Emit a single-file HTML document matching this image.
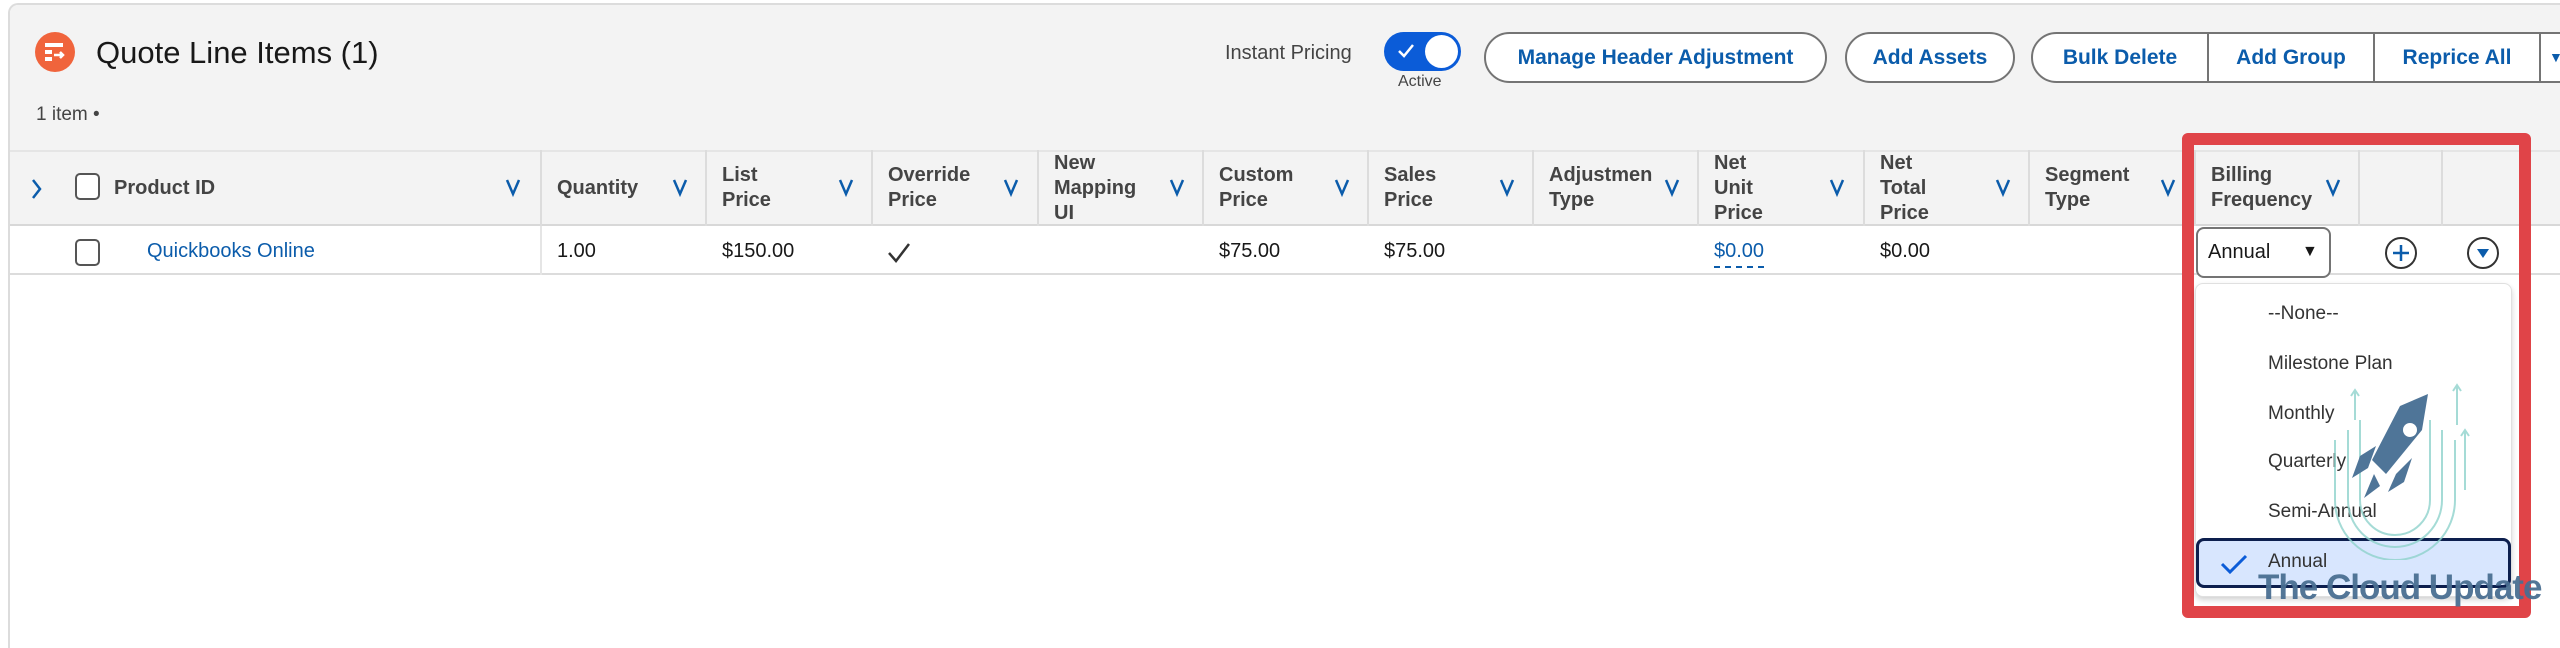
<!DOCTYPE html>
<html style="overflow:hidden;height:648px"><head><meta charset="utf-8"><style>
*{box-sizing:border-box;margin:0;padding:0}
body{width:2560px;height:648px;overflow:hidden;background:#fff;font-family:"Liberation Sans",sans-serif;position:relative;color:#181818}
.abs{position:absolute}
.card{left:8px;top:3px;width:2552px;height:645px;border:2px solid #dcdcdc;border-bottom:none;border-right:none;border-radius:10px 0 0 0;background:#fff}
.top{left:10px;top:5px;width:2550px;height:145px;background:#f3f3f3;border-radius:8px 0 0 0}
.btn{position:absolute;top:32px;height:51px;border:2px solid #747474;border-radius:26px;background:#fff;color:#0b5cab;font-size:21px;font-weight:bold;display:flex;align-items:center;justify-content:center}
.hdr{left:10px;top:150px;width:2550px;height:76px;background:#f3f3f3;border-top:2px solid #e5e5e5;border-bottom:2px solid #d8d8d8}
.col{position:absolute;top:150px;height:76px;border-left:2px solid #dcdcdc;font-size:20px;font-weight:bold;color:#444;line-height:25px;display:flex;align-items:center;padding-left:15px}
.cell{position:absolute;top:240px;font-size:20px;color:#181818}
.vl{position:absolute;top:226px;height:49px;width:2px;background:#e5e5e5}
.opt{position:absolute;left:2268px;font-size:19px;color:#333}
</style></head><body>
<div class="abs card"></div>
<div class="abs top"></div>
<svg class="abs" style="left:35px;top:32px" width="40" height="40" viewBox="0 0 40 40"><circle cx="20" cy="20" r="20" fill="#f0643c"/><rect x="10" y="11" width="18" height="4" fill="#fff"/><rect x="10" y="18" width="7" height="4" fill="#fff"/><rect x="10" y="25" width="7" height="4" fill="#fff"/><path d="M19 23h9m-3-3l3 3-3 3" stroke="#fff" stroke-width="2.5" fill="none"/></svg>
<div class="abs" style="left:96px;top:35px;font-size:31px;color:#181818">Quote Line Items (1)</div>
<div class="abs" style="left:36px;top:104px;font-size:19px;color:#444">1 item •</div>
<div class="abs" style="left:1225px;top:42px;font-size:20px;color:#444">Instant Pricing</div>
<div class="abs" style="left:1384px;top:32px;width:77px;height:39px;border-radius:20px;background:#0b5cd8"></div>
<div class="abs" style="left:1425px;top:35px;width:33px;height:33px;border-radius:50%;background:#fff"></div>
<svg class="abs" style="left:1397px;top:43px" width="18" height="16"><path d="M2 8l5 5 9-11" stroke="#fff" stroke-width="2.5" fill="none"/></svg>
<div class="abs" style="left:1398px;top:73px;font-size:16px;color:#444">Active</div>
<div class="btn" style="left:1484px;width:343px">Manage Header Adjustment</div>
<div class="btn" style="left:1845px;width:170px">Add Assets</div>
<div class="btn" style="left:2031px;width:600px;justify-content:flex-start;border-radius:26px 0 0 26px">
<span style="width:174px;text-align:center">Bulk Delete</span><span style="width:166px;text-align:center;border-left:2px solid #747474;line-height:47px">Add Group</span><span style="width:166px;text-align:center;border-left:2px solid #747474;line-height:47px">Reprice All</span><span style="width:30px;border-left:2px solid #747474;line-height:47px;padding-left:8px;font-size:14px">▼</span></div>
<div class="abs hdr"></div>
<svg class="abs" style="left:30px;top:178px" width="14" height="22"><path d="M3 2l7 9-7 9" stroke="#0b5cab" stroke-width="2.5" fill="none"/></svg>
<div class="abs" style="left:75px;top:173px;width:25px;height:27px;border:2px solid #555;border-radius:5px;background:#fff"></div>
<div class="col" style="left:8px;width:532px;border-left:none;padding-left:106px">Product ID</div>
<div class="col" style="left:540px;width:165px">Quantity</div>
<div class="col" style="left:705px;width:166px">List<br>Price</div>
<div class="col" style="left:871px;width:166px">Override<br>Price</div>
<div class="col" style="left:1037px;width:165px">New<br>Mapping<br>UI</div>
<div class="col" style="left:1202px;width:165px">Custom<br>Price</div>
<div class="col" style="left:1367px;width:165px">Sales<br>Price</div>
<div class="col" style="left:1532px;width:165px;overflow:hidden;white-space:nowrap">Adjustmen<br>Type</div>
<div class="col" style="left:1697px;width:166px">Net<br>Unit<br>Price</div>
<div class="col" style="left:1863px;width:165px">Net<br>Total<br>Price</div>
<div class="col" style="left:2028px;width:166px">Segment<br>Type</div>
<div class="col" style="left:2194px;width:164px">Billing<br>Frequency</div>
<div class="col" style="left:2358px;width:83px"></div>
<div class="col" style="left:2441px;width:119px"></div>
<svg width="2560" height="648" class="abs" style="left:0;top:0;pointer-events:none"><g stroke="#0b5cab" stroke-width="2.5" fill="none">
<path d="M507 180l6 14 6-14M674 180l6 14 6-14M840 180l6 14 6-14M1005 180l6 14 6-14M1171 180l6 14 6-14M1336 180l6 14 6-14M1501 180l6 14 6-14M1666 180l6 14 6-14M1831 180l6 14 6-14M1997 180l6 14 6-14M2162 180l6 14 6-14M2327 180l6 14 6-14"/></g></svg>
<div class="abs" style="left:10px;top:273px;width:2550px;height:2px;background:#dcdcdc"></div>
<div class="vl" style="left:540px"></div>
<div class="abs" style="left:75px;top:239px;width:25px;height:27px;border:2px solid #555;border-radius:5px;background:#fff"></div>
<div class="cell" style="left:147px;color:#0b5cab">Quickbooks Online</div>
<div class="cell" style="left:557px">1.00</div>
<div class="cell" style="left:722px">$150.00</div>
<svg class="abs" style="left:887px;top:242px" width="24" height="22"><path d="M2 11l7 8 13-17" stroke="#333" stroke-width="2.5" fill="none"/></svg>
<div class="cell" style="left:1219px">$75.00</div>
<div class="cell" style="left:1384px">$75.00</div>
<div class="cell" style="left:1714px;color:#0b5cab;border-bottom:2px dashed #0b5cab;padding-bottom:3px">$0.00</div>
<div class="cell" style="left:1880px">$0.00</div>
<div class="abs" style="left:2196px;top:227px;width:135px;height:51px;border:2px solid #747474;border-radius:8px;background:#fff;font-size:20px;padding:12px 0 0 10px">Annual <span style="position:absolute;left:104px;top:14px;font-size:16px">▼</span></div>
<svg class="abs" style="left:2384px;top:236px" width="34" height="34"><circle cx="17" cy="17" r="15" stroke="#333" stroke-width="2" fill="#fff"/><path d="M17 9v16M9 17h16" stroke="#0b5cab" stroke-width="2.5"/></svg>
<svg class="abs" style="left:2466px;top:236px" width="34" height="34"><circle cx="17" cy="17" r="15" stroke="#333" stroke-width="2" fill="#fff"/><path d="M11 13h12l-6 9z" fill="#0b5cab"/></svg>
<div class="abs" style="left:2182px;top:133px;width:349px;height:485px;border:12px solid #e04448;border-radius:6px"></div>
<div class="abs" style="left:2195px;top:283px;width:317px;height:314px;background:#fff;border:1px solid #e0e0e0;border-radius:8px;box-shadow:0 3px 6px rgba(0,0,0,.18)"></div>
<div class="abs" style="left:2196px;top:538px;width:315px;height:50px;background:#d8e6fe;border:3px solid #0d1f4e;border-radius:8px"></div>
<div class="opt" style="top:303px">--None--</div>
<div class="opt" style="top:353px">Milestone Plan</div>
<div class="opt" style="top:403px">Monthly</div>
<div class="opt" style="top:451px">Quarterly</div>
<div class="opt" style="top:501px">Semi-Annual</div>
<div class="opt" style="top:551px">Annual</div>
<svg class="abs" style="left:2220px;top:553px" width="28" height="22"><path d="M2 11l8 8 16-16" stroke="#0b5cd8" stroke-width="3" fill="none"/></svg>
<svg class="abs" style="left:2320px;top:380px" width="160" height="180" viewBox="0 0 160 180" fill="none" stroke="#8fd3cc" stroke-width="2" opacity=".8">
<path d="M15 60v60a60 60 0 0 0 120 0V60M28 50v70a47 47 0 0 0 94 0V50M40 40v80a35 35 0 0 0 70 0V40"/>
<path d="M35 10v30M31 16l4-6 4 6M137 5v40M133 11l4-6 4 6M145 50v60M141 56l4-6 4 6"/>
</svg>
<svg class="abs" style="left:2350px;top:390px" width="100" height="120" viewBox="0 0 100 120"><path d="M78 4L50 16 22 70l14 14 36-44z" fill="#4f7598"/><circle cx="60" cy="40" r="7" fill="#fff"/><path d="M26 56L10 66 2 88l16-10zM46 84l-8 18 16-10 8-24zM24 84l-10 24 16-12z" fill="#4f7598"/></svg>
<div class="abs" style="left:2258px;top:568px;font-size:35px;font-weight:bold;color:#4a6f92;letter-spacing:-1px;opacity:.95">The Cloud Update</div>
</body></html>
